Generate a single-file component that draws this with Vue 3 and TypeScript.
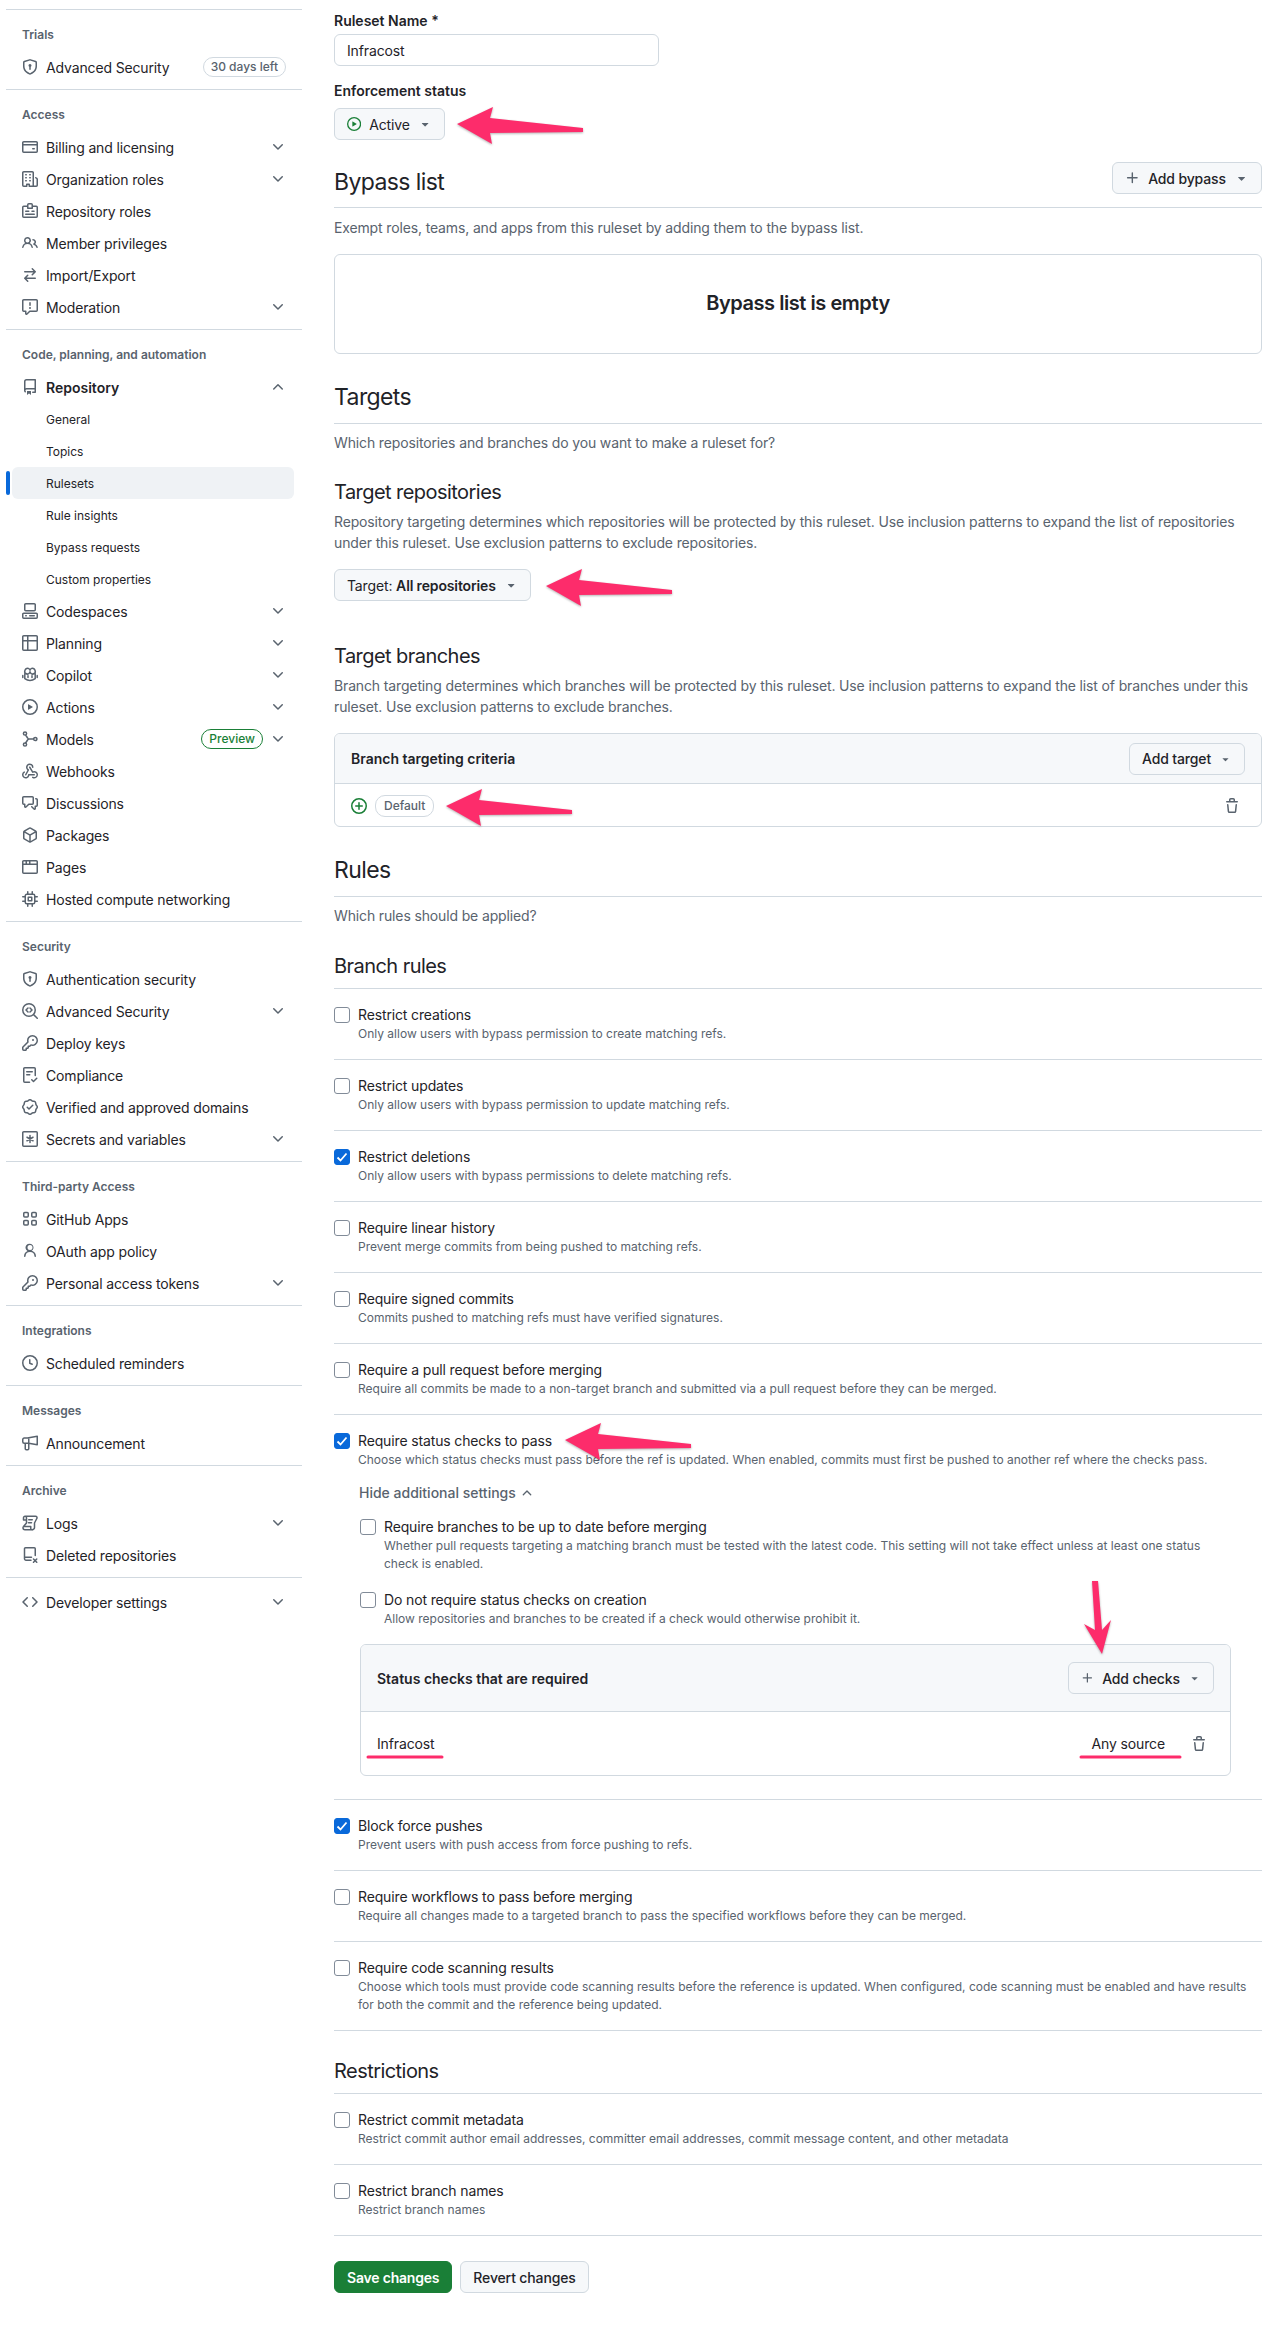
<script setup lang="ts">
import { h } from 'vue'

type IconDef = { f?: string; s?: string }

const icons: Record<string, IconDef> = {
  shield: { f: 'm8.533.133 5.25 1.68A1.75 1.75 0 0 1 15 3.48V7c0 1.566-.32 3.182-1.303 4.682-.983 1.498-2.585 2.813-5.032 3.855a1.697 1.697 0 0 1-1.33 0c-2.447-1.042-4.049-2.357-5.032-3.855C1.32 10.182 1 8.566 1 7V3.48a1.75 1.75 0 0 1 1.217-1.667l5.25-1.68a1.748 1.748 0 0 1 1.066 0Zm-.61 1.429.001.001-5.25 1.68a.251.251 0 0 0-.174.237V7c0 1.36.275 2.666 1.057 3.859.784 1.194 2.121 2.342 4.366 3.298a.196.196 0 0 0 .154 0c2.245-.957 3.582-2.103 4.366-3.297C13.225 9.666 13.5 8.358 13.5 7V3.48a.25.25 0 0 0-.174-.238l-5.25-1.68a.25.25 0 0 0-.153 0ZM9.5 6.5c0 .536-.286 1.032-.75 1.3v2.45a.75.75 0 0 1-1.5 0V7.8A1.5 1.5 0 1 1 9.5 6.5Z' },
  card: { f: 'M10.75 9a.75.75 0 0 0 0 1.5h1.5a.75.75 0 0 0 0-1.5h-1.5ZM0 3.75C0 2.784.784 2 1.75 2h12.5c.966 0 1.75.784 1.75 1.75v8.5A1.75 1.75 0 0 1 14.25 14H1.75A1.75 1.75 0 0 1 0 12.25ZM14.5 6.5h-13v5.75c0 .138.112.25.25.25h12.5a.25.25 0 0 0 .25-.25Zm0-2.75a.25.25 0 0 0-.25-.25H1.75a.25.25 0 0 0-.25.25V5h13Z' },
  org: { f: 'M1.75 16A1.75 1.75 0 0 1 0 14.25V1.75C0 .784.784 0 1.75 0h8.5C11.216 0 12 .784 12 1.75v12.5c0 .085-.006.168-.018.25h2.268a.25.25 0 0 0 .25-.25V8.285a.25.25 0 0 0-.111-.208l-1.055-.703a.749.749 0 1 1 .832-1.248l1.055.703c.487.325.779.871.779 1.456v5.965A1.75 1.75 0 0 1 14.25 16h-3.5a.766.766 0 0 1-.197-.026c-.099.017-.2.026-.303.026h-3a.75.75 0 0 1-.75-.75V14h-1v1.25a.75.75 0 0 1-.75.75Zm-.25-1.75c0 .138.112.25.25.25H4v-1.25a.75.75 0 0 1 .75-.75h2.5a.75.75 0 0 1 .75.75v1.25h2.25a.25.25 0 0 0 .25-.25V1.75a.25.25 0 0 0-.25-.25h-8.5a.25.25 0 0 0-.25.25ZM3.75 6h.5a.75.75 0 0 1 0 1.5h-.5a.75.75 0 0 1 0-1.5ZM3 3.75A.75.75 0 0 1 3.75 3h.5a.75.75 0 0 1 0 1.5h-.5A.75.75 0 0 1 3 3.75Zm4 3A.75.75 0 0 1 7.75 6h.5a.75.75 0 0 1 0 1.5h-.5A.75.75 0 0 1 7 6.75ZM7.75 3h.5a.75.75 0 0 1 0 1.5h-.5a.75.75 0 0 1 0-1.5ZM3 9.75A.75.75 0 0 1 3.75 9h.5a.75.75 0 0 1 0 1.5h-.5A.75.75 0 0 1 3 9.75ZM7.75 9h.5a.75.75 0 0 1 0 1.5h-.5a.75.75 0 0 1 0-1.5Z' },
  badge: { s: 'M5.5 3.25H1.75a1 1 0 0 0-1 1v9a1 1 0 0 0 1 1h12.5a1 1 0 0 0 1-1v-9a1 1 0 0 0-1-1H10.5M5.75 5.25v-3.5a1 1 0 0 1 1-1h2.5a1 1 0 0 1 1 1v3.5ZM3.75 8.25h3M3.75 11.25h8.5M10 8.25h2' },
  people: { f: 'M2 5.5a3.5 3.5 0 1 1 5.898 2.549 5.508 5.508 0 0 1 3.034 4.084.75.75 0 1 1-1.482.235 4 4 0 0 0-7.9 0 .75.75 0 0 1-1.482-.236A5.507 5.507 0 0 1 3.102 8.05 3.493 3.493 0 0 1 2 5.5ZM11 4a3.001 3.001 0 0 1 2.22 5.018 5.01 5.01 0 0 1 2.56 3.012.749.749 0 0 1-.885.954.752.752 0 0 1-.549-.514 3.507 3.507 0 0 0-2.522-2.372.75.75 0 0 1-.574-.73v-.352a.75.75 0 0 1 .416-.672A1.5 1.5 0 0 0 11 5.5.75.75 0 0 1 11 4Zm-5.5-.5a2 2 0 1 0-.001 3.999A2 2 0 0 0 5.5 3.5Z' },
  switch: { f: 'M5.22 14.78a.75.75 0 0 0 1.06-1.06L4.56 12h8.69a.75.75 0 0 0 0-1.5H4.56l1.72-1.72a.75.75 0 0 0-1.06-1.06l-3 3a.75.75 0 0 0 0 1.06l3 3Zm5.56-6.5a.75.75 0 1 1-1.06-1.06l1.72-1.72H2.75a.75.75 0 0 1 0-1.5h8.69L9.72 2.28a.75.75 0 0 1 1.06-1.06l3 3a.75.75 0 0 1 0 1.06l-3 3Z' },
  report: { f: 'M0 1.75C0 .784.784 0 1.75 0h12.5C15.216 0 16 .784 16 1.75v9.5A1.75 1.75 0 0 1 14.25 13H8.06l-2.573 2.573A1.458 1.458 0 0 1 3 14.543V13H1.75A1.75 1.75 0 0 1 0 11.25Zm1.75-.25a.25.25 0 0 0-.25.25v9.5c0 .138.112.25.25.25h2a.75.75 0 0 1 .75.75v2.19l2.72-2.72a.749.749 0 0 1 .53-.22h6.5a.25.25 0 0 0 .25-.25v-9.5a.25.25 0 0 0-.25-.25Zm7 2.25v2.5a.75.75 0 0 1-1.5 0v-2.5a.75.75 0 0 1 1.5 0ZM9 9a1 1 0 1 1-2 0 1 1 0 0 1 2 0Z' },
  repo: { f: 'M2 2.5A2.5 2.5 0 0 1 4.5 0h8.75a.75.75 0 0 1 .75.75v12.5a.75.75 0 0 1-.75.75h-2.5a.75.75 0 0 1 0-1.5h1.75v-2h-8a1 1 0 0 0-.714 1.7.75.75 0 1 1-1.072 1.05A2.495 2.495 0 0 1 2 11.5Zm10.5-1h-8a1 1 0 0 0-1 1v6.708A2.486 2.486 0 0 1 4.5 9h8ZM5 12.25a.25.25 0 0 1 .25-.25h3.5a.25.25 0 0 1 .25.25v3.25a.25.25 0 0 1-.4.2l-1.45-1.087a.249.249 0 0 0-.3 0L5.4 15.7a.25.25 0 0 1-.4-.2Z' },
  codespaces: { f: 'M0 11.25c0-.966.784-1.75 1.75-1.75h12.5c.966 0 1.75.784 1.75 1.75v3A1.75 1.75 0 0 1 14.25 16H1.75A1.75 1.75 0 0 1 0 14.25Zm2-9.5C2 .784 2.784 0 3.75 0h8.5C13.216 0 14 .784 14 1.75v5a1.75 1.75 0 0 1-1.75 1.75h-8.5A1.75 1.75 0 0 1 2 6.75Zm1.75-.25a.25.25 0 0 0-.25.25v5c0 .138.112.25.25.25h8.5a.25.25 0 0 0 .25-.25v-5a.25.25 0 0 0-.25-.25Zm-2 9.5a.25.25 0 0 0-.25.25v3c0 .138.112.25.25.25h12.5a.25.25 0 0 0 .25-.25v-3a.25.25 0 0 0-.25-.25ZM7 12.75a.75.75 0 0 1 .75-.75h4.5a.75.75 0 0 1 0 1.5h-4.5a.75.75 0 0 1-.75-.75Zm-4 0a.75.75 0 0 1 .75-.75h.5a.75.75 0 0 1 0 1.5h-.5a.75.75 0 0 1-.75-.75Z' },
  table: { f: 'M0 1.75C0 .784.784 0 1.75 0h12.5C15.216 0 16 .784 16 1.75v12.5A1.75 1.75 0 0 1 14.25 16H1.75A1.75 1.75 0 0 1 0 14.25ZM6.5 6.5v8h7.75a.25.25 0 0 0 .25-.25V6.5Zm8-1.5V1.75a.25.25 0 0 0-.25-.25H6.5V5Zm-13 1.5v7.75c0 .138.112.25.25.25H5v-8ZM5 5V1.5H1.75a.25.25 0 0 0-.25.25V5Z' },
  copilot: { s: 'M3 3.2C3.6 1.6 5.6 1 6.8 1.6c.7.3 1.2 1 1.2 1.6 0-.6.5-1.3 1.2-1.6 1.2-.6 3.2 0 3.8 1.6.4 1 .3 2.6-.7 3.3-1 .6-2.8.6-3.5-.2-.4-.4-.7-1-.8-1.5-.1.5-.4 1.1-.8 1.5-.7.8-2.5.8-3.5.2C2.7 5.8 2.6 4.2 3 3.2ZM2.8 6.5v5.2c1.6 1.2 3.4 1.9 5.2 1.9s3.6-.7 5.2-1.9V6.5M.8 8.5v2M15.2 8.5v2M6 8.75v1.75M10 8.75v1.75' },
  play: { f: 'M8 0a8 8 0 1 1 0 16A8 8 0 0 1 8 0ZM1.5 8a6.5 6.5 0 1 0 13 0 6.5 6.5 0 0 0-13 0Zm4.879-2.773 4.264 2.559a.25.25 0 0 1 0 .428l-4.264 2.559A.25.25 0 0 1 6 10.559V5.442a.25.25 0 0 1 .379-.215Z' },
  models: { s: 'M3.6 4l2 3c.3.6.8 1 1.5 1h4M3.6 12l2-3c.2-.4.6-1 1.5-1M4.6 2.5a1.6 1.6 0 1 1-3.2 0 1.6 1.6 0 0 1 3.2 0ZM4.6 13.5a1.6 1.6 0 1 1-3.2 0 1.6 1.6 0 0 1 3.2 0ZM14.9 8a1.6 1.6 0 1 1-3.2 0 1.6 1.6 0 0 1 3.2 0Z' },
  webhook: { f: 'M5.5 4.25a2.25 2.25 0 0 1 4.5 0 .75.75 0 0 0 1.5 0 3.75 3.75 0 1 0-6.14 2.889l-2.272 4.258a.75.75 0 0 0 1.324.706L7 7.25a.75.75 0 0 0-.309-1.015A2.25 2.25 0 0 1 5.5 4.25ZM7.364 3.607a.75.75 0 0 1 1.03.257l2.608 4.349a3.75 3.75 0 1 1-.628 6.785.75.75 0 0 1 .752-1.299 2.25 2.25 0 1 0-.033-3.88.75.75 0 0 1-1.03-.256L7.107 4.636a.75.75 0 0 1 .257-1.03ZM2.9 8.776A.75.75 0 0 1 2.625 9.8 2.25 2.25 0 1 0 6 11.75a.75.75 0 0 1 .75-.751h5.5a.75.75 0 0 1 0 1.5H7.425a3.751 3.751 0 1 1-5.55-3.998.75.75 0 0 1 1.024.274Z' },
  discussion: { f: 'M1.75 1h8.5c.966 0 1.75.784 1.75 1.75v5.5A1.75 1.75 0 0 1 10.25 10H7.061l-2.574 2.573A1.458 1.458 0 0 1 2 11.543V10h-.25A1.75 1.75 0 0 1 0 8.25v-5.5C0 1.784.784 1 1.75 1ZM1.5 2.75v5.5c0 .138.112.25.25.25h1a.75.75 0 0 1 .75.75v2.19l2.72-2.72a.749.749 0 0 1 .53-.22h3.5a.25.25 0 0 0 .25-.25v-5.5a.25.25 0 0 0-.25-.25h-8.5a.25.25 0 0 0-.25.25Zm13 2a.25.25 0 0 0-.25-.25h-.5a.75.75 0 0 1 0-1.5h.5c.966 0 1.75.784 1.75 1.75v5.5A1.75 1.75 0 0 1 14.25 12H14v1.543a1.458 1.458 0 0 1-2.487 1.03L9.22 12.28a.749.749 0 0 1 .326-1.275.749.749 0 0 1 .734.215l2.22 2.22v-2.19a.75.75 0 0 1 .75-.75h1a.25.25 0 0 0 .25-.25Z' },
  package: { f: 'm8.878.392 5.25 3.045c.54.314.872.89.872 1.514v6.098a1.75 1.75 0 0 1-.872 1.514l-5.25 3.045a1.75 1.75 0 0 1-1.756 0l-5.25-3.045A1.75 1.75 0 0 1 1 11.049V4.951c0-.624.332-1.201.872-1.514L7.122.392a1.75 1.75 0 0 1 1.756 0ZM7.875 1.69l-4.63 2.685L8 7.133l4.755-2.758-4.63-2.685a.248.248 0 0 0-.25 0ZM2.5 5.677v5.372c0 .09.047.171.125.216l4.625 2.683V8.432Zm6.25 8.271 4.625-2.683a.25.25 0 0 0 .125-.216V5.677L8.75 8.432Z' },
  browser: { f: 'M0 2.75C0 1.784.784 1 1.75 1h12.5c.966 0 1.75.784 1.75 1.75v10.5A1.75 1.75 0 0 1 14.25 15H1.75A1.75 1.75 0 0 1 0 13.25ZM14.5 6h-13v7.25c0 .138.112.25.25.25h12.5a.25.25 0 0 0 .25-.25Zm-6-3.5v2h6V2.75a.25.25 0 0 0-.25-.25ZM5 2.5v2h2v-2Zm-3.25 0a.25.25 0 0 0-.25.25V4.5h2v-2Z' },
  cpu: { s: 'M4.75 3.25h6.5a1.5 1.5 0 0 1 1.5 1.5v6.5a1.5 1.5 0 0 1-1.5 1.5h-6.5a1.5 1.5 0 0 1-1.5-1.5v-6.5a1.5 1.5 0 0 1 1.5-1.5ZM6.25 6.25h3.5v3.5h-3.5ZM5.75.75v2.5M10.25.75v2.5M5.75 12.75v2.5M10.25 12.75v2.5M.75 5.75h2.5M.75 10.25h2.5M12.75 5.75h2.5M12.75 10.25h2.5' },
  codescan: { s: 'M13.25 7a6.25 6.25 0 1 1-12.5 0 6.25 6.25 0 0 1 12.5 0ZM11.6 11.6l3.65 3.65M6 5 4 7l2 2M8 5l2 2-2 2' },
  key: { f: 'M10.5 0a5.499 5.499 0 1 1-1.288 10.848l-.932.932a.749.749 0 0 1-.53.22H7v.75a.749.749 0 0 1-.22.53l-.5.5a.749.749 0 0 1-.53.22H5v.75a.749.749 0 0 1-.22.53l-.5.5a.749.749 0 0 1-.53.22h-2A1.75 1.75 0 0 1 0 14.25v-2c0-.199.079-.389.22-.53l4.932-4.932A5.5 5.5 0 0 1 10.5 0Zm-4 5.5c-.001.431.069.86.205 1.269a.75.75 0 0 1-.181.768L1.5 12.56v1.69c0 .138.112.25.25.25h1.69l.06-.06v-1.19a.75.75 0 0 1 .75-.75h1.19l.06-.06v-1.19a.75.75 0 0 1 .75-.75h1.19l1.023-1.025a.75.75 0 0 1 .768-.18A4 4 0 1 0 6.5 5.5ZM11 6a1 1 0 1 1 0-2 1 1 0 0 1 0 2Z' },
  compliance: { s: 'M13.25 8.5V1.75a1 1 0 0 0-1-1h-9.5a1 1 0 0 0-1 1v12.5a1 1 0 0 0 1 1H7.5M4.75 4.75h5.5M4.75 7.75h3M9.75 12.75l1.75 1.75 3.25-3.25' },
  verified: { f: 'm9.585.52.929.68c.153.112.331.186.518.215l1.138.175a2.678 2.678 0 0 1 2.24 2.24l.174 1.139c.029.187.103.365.215.518l.68.928a2.677 2.677 0 0 1 0 3.17l-.68.928a1.174 1.174 0 0 0-.215.518l-.175 1.138a2.678 2.678 0 0 1-2.241 2.241l-1.138.175a1.17 1.17 0 0 0-.518.215l-.928.68a2.677 2.677 0 0 1-3.17 0l-.928-.68a1.174 1.174 0 0 0-.518-.215L3.83 14.41a2.678 2.678 0 0 1-2.24-2.24l-.175-1.138a1.17 1.17 0 0 0-.215-.518l-.68-.928a2.677 2.677 0 0 1 0-3.17l.68-.928c.112-.153.186-.331.215-.518l.175-1.14a2.678 2.678 0 0 1 2.24-2.24l1.139-.175c.187-.029.365-.103.518-.215l.928-.68a2.677 2.677 0 0 1 3.17 0ZM7.303 1.728l-.927.68a2.67 2.67 0 0 1-1.18.489l-1.137.174a1.179 1.179 0 0 0-.987.987l-.174 1.136a2.677 2.677 0 0 1-.489 1.18l-.68.928a1.18 1.18 0 0 0 0 1.394l.68.927c.256.348.424.753.489 1.18l.174 1.137c.078.509.478.909.987.987l1.136.174a2.67 2.67 0 0 1 1.18.489l.928.68c.414.305.979.305 1.394 0l.927-.68a2.67 2.67 0 0 1 1.18-.489l1.137-.174a1.18 1.18 0 0 0 .987-.987l.174-1.136a2.67 2.67 0 0 1 .489-1.18l.68-.928a1.176 1.176 0 0 0 0-1.394l-.68-.927a2.686 2.686 0 0 1-.489-1.18l-.174-1.137a1.179 1.179 0 0 0-.987-.987l-1.136-.174a2.677 2.677 0 0 1-1.18-.489l-.928-.68a1.176 1.176 0 0 0-1.394 0ZM11.28 6.78l-3.75 3.75a.75.75 0 0 1-1.06 0L4.72 8.78a.751.751 0 0 1 .018-1.042.751.751 0 0 1 1.042-.018L7 8.939l3.22-3.219a.751.751 0 0 1 1.042.018.751.751 0 0 1 .018 1.042Z' },
  secret: { s: 'M1.75.75h12.5a1 1 0 0 1 1 1v12.5a1 1 0 0 1-1 1H1.75a1 1 0 0 1-1-1V1.75a1 1 0 0 1 1-1ZM8 4.5v7M5 6.25l6 3.5M11 6.25l-6 3.5' },
  apps: { s: 'M2.75 1.5h2.5a1 1 0 0 1 1 1V5a1 1 0 0 1-1 1h-2.5a1 1 0 0 1-1-1V2.5a1 1 0 0 1 1-1ZM10.75 1.5h2.5a1 1 0 0 1 1 1V5a1 1 0 0 1-1 1h-2.5a1 1 0 0 1-1-1V2.5a1 1 0 0 1 1-1ZM2.75 9.5h2.5a1 1 0 0 1 1 1V13a1 1 0 0 1-1 1h-2.5a1 1 0 0 1-1-1v-2.5a1 1 0 0 1 1-1ZM10.75 9.5h2.5a1 1 0 0 1 1 1V13a1 1 0 0 1-1 1h-2.5a1 1 0 0 1-1-1v-2.5a1 1 0 0 1 1-1Z' },
  person: { f: 'M10.561 8.073a6.005 6.005 0 0 1 3.432 5.142.75.75 0 1 1-1.498.07 4.5 4.5 0 0 0-8.99 0 .75.75 0 0 1-1.498-.07 6.004 6.004 0 0 1 3.431-5.142 3.999 3.999 0 1 1 4.123 0ZM10.5 4.5a2.5 2.5 0 1 0-5 0 2.5 2.5 0 0 0 5 0Z' },
  clock: { f: 'M8 0a8 8 0 1 1 0 16A8 8 0 0 1 8 0ZM1.5 8a6.5 6.5 0 1 0 13 0 6.5 6.5 0 0 0-13 0Zm7-3.25v2.992l2.028.812a.75.75 0 0 1-.557 1.392l-2.5-1A.751.751 0 0 1 7 8.25v-3.5a.75.75 0 0 1 1.5 0Z' },
  megaphone: { s: 'M15.25 1.25v8.5L6.75 8.25M15.25 1.25 5.5 3H2.25a1.5 1.5 0 0 0-1.5 1.5v2.25a1.5 1.5 0 0 0 1.5 1.5h4.5M3.25 8.25v5.5a1 1 0 0 0 1 1h1.5a1 1 0 0 0 1-1v-5.5M6.75 3v5.25' },
  scroll: { s: 'M3 1.25h10.5a1.5 1.5 0 0 1 1.3 2.25l-2.3 4.5v4.5a2.25 2.25 0 0 1-2.25 2.25H3a2 2 0 0 1-2-2c0-.5.2-1 .5-1.25L4.5 8V2.75A1.5 1.5 0 0 0 3 1.25a1.5 1.5 0 0 0-1.5 1.5V5h3M1.5 11.5h7.25v2a1.75 1.75 0 0 0 1.5 1.5M6.75 4.75h3.5M6.5 7.75h3' },
  deleted: { s: 'M13.25 8.5V1.75a1 1 0 0 0-1-1H3.5a1 1 0 0 0-1 1v10a1.5 1.5 0 0 0 1.5 1.5h5M2.5 10.25h7M11.5 12l3.25 3.25M14.75 12l-3.25 3.25' },
  code: { f: 'm11.28 3.22 4.25 4.25a.75.75 0 0 1 0 1.06l-4.25 4.25a.749.749 0 0 1-1.275-.326.749.749 0 0 1 .215-.734L13.94 8l-3.72-3.72a.749.749 0 0 1 .326-1.275.749.749 0 0 1 .734.215Zm-6.56 0a.751.751 0 0 1 1.042.018.751.751 0 0 1 .018 1.042L2.06 8l3.72 3.72a.749.749 0 0 1-.326 1.275.749.749 0 0 1-.734-.215L.47 8.53a.75.75 0 0 1 0-1.06Z' },
  down: { f: 'M12.78 5.22a.749.749 0 0 1 0 1.06l-4.25 4.25a.749.749 0 0 1-1.06 0L3.22 6.28a.749.749 0 1 1 1.06-1.06L8 8.939l3.72-3.72a.749.749 0 0 1 1.06 0Z' },
  up: { f: 'M3.22 10.53a.749.749 0 0 1 0-1.06l4.25-4.25a.749.749 0 0 1 1.06 0l4.25 4.25a.749.749 0 1 1-1.06 1.06L8 6.811 4.28 10.53a.749.749 0 0 1-1.06 0Z' },
  plus: { f: 'M7.75 2a.75.75 0 0 1 .75.75V7h4.25a.75.75 0 0 1 0 1.5H8.5v4.25a.75.75 0 0 1-1.5 0V8.5H2.75a.75.75 0 0 1 0-1.5H7V2.75A.75.75 0 0 1 7.75 2Z' },
  plusCircle: { f: 'M8 0a8 8 0 1 1 0 16A8 8 0 0 1 8 0ZM1.5 8a6.5 6.5 0 1 0 13 0 6.5 6.5 0 0 0-13 0Zm7.25-3.25v2.5h2.5a.75.75 0 0 1 0 1.5h-2.5v2.5a.75.75 0 0 1-1.5 0v-2.5h-2.5a.75.75 0 0 1 0-1.5h2.5v-2.5a.75.75 0 0 1 1.5 0Z' },
  trash: { f: 'M11 1.75V3h2.25a.75.75 0 0 1 0 1.5H2.75a.75.75 0 0 1 0-1.5H5V1.75C5 .784 5.784 0 6.75 0h2.5C10.216 0 11 .784 11 1.75ZM4.496 6.675l.66 6.6a.25.25 0 0 0 .249.225h5.19a.25.25 0 0 0 .249-.225l.66-6.6a.75.75 0 0 1 1.492.149l-.66 6.6A1.748 1.748 0 0 1 10.595 15h-5.19a1.75 1.75 0 0 1-1.741-1.575l-.66-6.6a.75.75 0 1 1 1.492-.15ZM6.5 1.75V3h3V1.75a.25.25 0 0 0-.25-.25h-2.5a.25.25 0 0 0-.25.25Z' },
  caret: { f: 'm4.427 7.427 3.396 3.396a.25.25 0 0 0 .354 0l3.396-3.396A.25.25 0 0 0 11.396 7H4.604a.25.25 0 0 0-.177.427Z' },
}

const Octicon = (props: { name: string; size?: number }) => {
  const def = icons[props.name]
  const paths = []
  if (def.f) paths.push(h('path', { d: def.f, fill: 'currentColor' }))
  if (def.s) {
    paths.push(h('path', {
      d: def.s,
      fill: 'none',
      stroke: 'currentColor',
      'stroke-width': 1.5,
      'stroke-linecap': 'round',
      'stroke-linejoin': 'round',
    }))
  }
  const size = props.size ?? 16
  return h('svg', { viewBox: '0 0 16 16', width: size, height: size, 'aria-hidden': 'true' }, paths)
}
Octicon.props = ['name', 'size']

type NavItem = {
  label: string
  icon?: string
  chevron?: 'down' | 'up'
  bold?: boolean
  sub?: boolean
  active?: boolean
  pill?: string
  preview?: boolean
}
type NavSection = { title?: string; items: NavItem[] }

const nav: NavSection[] = [
  { title: 'Trials', items: [{ label: 'Advanced Security', icon: 'shield', pill: '30 days left' }] },
  {
    title: 'Access',
    items: [
      { label: 'Billing and licensing', icon: 'card', chevron: 'down' },
      { label: 'Organization roles', icon: 'org', chevron: 'down' },
      { label: 'Repository roles', icon: 'badge' },
      { label: 'Member privileges', icon: 'people' },
      { label: 'Import/Export', icon: 'switch' },
      { label: 'Moderation', icon: 'report', chevron: 'down' },
    ],
  },
  {
    title: 'Code, planning, and automation',
    items: [
      { label: 'Repository', icon: 'repo', chevron: 'up', bold: true },
      { label: 'General', sub: true },
      { label: 'Topics', sub: true },
      { label: 'Rulesets', sub: true, active: true },
      { label: 'Rule insights', sub: true },
      { label: 'Bypass requests', sub: true },
      { label: 'Custom properties', sub: true },
      { label: 'Codespaces', icon: 'codespaces', chevron: 'down' },
      { label: 'Planning', icon: 'table', chevron: 'down' },
      { label: 'Copilot', icon: 'copilot', chevron: 'down' },
      { label: 'Actions', icon: 'play', chevron: 'down' },
      { label: 'Models', icon: 'models', chevron: 'down', preview: true },
      { label: 'Webhooks', icon: 'webhook' },
      { label: 'Discussions', icon: 'discussion' },
      { label: 'Packages', icon: 'package' },
      { label: 'Pages', icon: 'browser' },
      { label: 'Hosted compute networking', icon: 'cpu' },
    ],
  },
  {
    title: 'Security',
    items: [
      { label: 'Authentication security', icon: 'shield' },
      { label: 'Advanced Security', icon: 'codescan', chevron: 'down' },
      { label: 'Deploy keys', icon: 'key' },
      { label: 'Compliance', icon: 'compliance' },
      { label: 'Verified and approved domains', icon: 'verified' },
      { label: 'Secrets and variables', icon: 'secret', chevron: 'down' },
    ],
  },
  {
    title: 'Third-party Access',
    items: [
      { label: 'GitHub Apps', icon: 'apps' },
      { label: 'OAuth app policy', icon: 'person' },
      { label: 'Personal access tokens', icon: 'key', chevron: 'down' },
    ],
  },
  { title: 'Integrations', items: [{ label: 'Scheduled reminders', icon: 'clock' }] },
  { title: 'Messages', items: [{ label: 'Announcement', icon: 'megaphone' }] },
  {
    title: 'Archive',
    items: [
      { label: 'Logs', icon: 'scroll', chevron: 'down' },
      { label: 'Deleted repositories', icon: 'deleted' },
    ],
  },
  { items: [{ label: 'Developer settings', icon: 'code', chevron: 'down' }] },
]

type Rule = { title: string; desc: string; checked?: boolean }

const rulesBefore: Rule[] = [
  { title: 'Restrict creations', desc: 'Only allow users with bypass permission to create matching refs.' },
  { title: 'Restrict updates', desc: 'Only allow users with bypass permission to update matching refs.' },
  { title: 'Restrict deletions', desc: 'Only allow users with bypass permissions to delete matching refs.', checked: true },
  { title: 'Require linear history', desc: 'Prevent merge commits from being pushed to matching refs.' },
  { title: 'Require signed commits', desc: 'Commits pushed to matching refs must have verified signatures.' },
  { title: 'Require a pull request before merging', desc: 'Require all commits be made to a non-target branch and submitted via a pull request before they can be merged.' },
]

const rulesAfter: Rule[] = [
  { title: 'Block force pushes', desc: 'Prevent users with push access from force pushing to refs.', checked: true },
  { title: 'Require workflows to pass before merging', desc: 'Require all changes made to a targeted branch to pass the specified workflows before they can be merged.' },
  { title: 'Require code scanning results', desc: 'Choose which tools must provide code scanning results before the reference is updated. When configured, code scanning must be enabled and have results for both the commit and the reference being updated.' },
]

const restrictions: Rule[] = [
  { title: 'Restrict commit metadata', desc: 'Restrict commit author email addresses, committer email addresses, commit message content, and other metadata' },
  { title: 'Restrict branch names', desc: 'Restrict branch names' },
]

const subSettings: Rule[] = [
  { title: 'Require branches to be up to date before merging', desc: 'Whether pull requests targeting a matching branch must be tested with the latest code. This setting will not take effect unless at least one status check is enabled.' },
  { title: 'Do not require status checks on creation', desc: 'Allow repositories and branches to be created if a check would otherwise prohibit it.' },
]

// annotation arrows drawn on top of the screenshot, tip at x,y
const arrowShape = 'M0 0 36 -17 33 -6 126 4 126 8 33 9 35 20Z'
const arrows = [
  { x: 457, y: 124 },
  { x: 546, y: 586 },
  { x: 446, y: 806 },
  { x: 565, y: 1440 },
]
</script>

<template>
  <div class="page">
    <aside class="sidebar">
      <section v-for="(sec, i) in nav" :key="i" class="nav-section" :class="{ untitled: !sec.title }">
        <h3 v-if="sec.title" class="nav-title">{{ sec.title }}</h3>
        <div
          v-for="item in sec.items"
          :key="item.label"
          class="nav-row"
          :class="{ bold: item.bold, sub: item.sub, active: item.active }"
        >
          <Octicon v-if="item.icon" :name="item.icon" class="nav-icon" />
          <span class="nav-label">{{ item.label }}</span>
          <span v-if="item.pill" class="pill">{{ item.pill }}</span>
          <span v-if="item.preview" class="pill preview">Preview</span>
          <Octicon v-if="item.chevron" :name="item.chevron" class="nav-chevron" />
        </div>
      </section>
    </aside>

    <main class="main">
      <label class="field-label first">Ruleset Name *</label>
      <div class="text-input">Infracost</div>
      <label class="field-label status">Enforcement status</label>
      <button class="btn status-btn">
        <Octicon name="play" class="green" />
        <span>Active</span>
        <Octicon name="caret" class="caret" />
      </button>

      <div class="bypass-head">
        <h2 class="h-big">Bypass list</h2>
        <button class="btn bypass-btn">
          <Octicon name="plus" class="muted" />
          <span>Add bypass</span>
          <Octicon name="caret" class="caret" />
        </button>
      </div>
      <p class="lead bypass-lead">Exempt roles, teams, and apps from this ruleset by adding them to the bypass list.</p>
      <div class="bypass-empty">Bypass list is empty</div>

      <h2 class="h-big ruled">Targets</h2>
      <p class="lead">Which repositories and branches do you want to make a ruleset for?</p>

      <h3 class="h-mid repos">Target repositories</h3>
      <p class="lead para">Repository targeting determines which repositories will be protected by this ruleset. Use inclusion patterns to expand the list of repositories under this ruleset. Use exclusion patterns to exclude repositories.</p>
      <button class="btn target-btn">
        <span>Target: <b>All repositories</b></span>
        <Octicon name="caret" class="caret" />
      </button>

      <h3 class="h-mid branches">Target branches</h3>
      <p class="lead para">Branch targeting determines which branches will be protected by this ruleset. Use inclusion patterns to expand the list of branches under this ruleset. Use exclusion patterns to exclude branches.</p>

      <div class="panel criteria">
        <div class="panel-head">
          <b>Branch targeting criteria</b>
          <button class="btn add-target">
            <span>Add target</span>
            <Octicon name="caret" class="caret" />
          </button>
        </div>
        <div class="criteria-row">
          <Octicon name="plusCircle" class="green" />
          <span class="default-label">Default</span>
          <Octicon name="trash" class="muted trash" />
        </div>
      </div>

      <h2 class="h-big ruled rules">Rules</h2>
      <p class="lead">Which rules should be applied?</p>
      <h3 class="h-mid ruled branch-rules">Branch rules</h3>

      <div v-for="r in rulesBefore" :key="r.title" class="rule">
        <span class="check" :class="{ on: r.checked }">
          <svg v-if="r.checked" viewBox="0 0 16 16" width="16" height="16"><path d="M3.5 8.5 6.5 11.5 12.5 4.5" fill="none" stroke="#fff" stroke-width="1.8" /></svg>
        </span>
        <div>
          <div class="rule-title">{{ r.title }}</div>
          <div class="rule-desc">{{ r.desc }}</div>
        </div>
      </div>

      <div class="rule status-rule">
        <span class="check on">
          <svg viewBox="0 0 16 16" width="16" height="16"><path d="M3.5 8.5 6.5 11.5 12.5 4.5" fill="none" stroke="#fff" stroke-width="1.8" /></svg>
        </span>
        <div class="status-body">
          <div class="rule-title">Require status checks to pass</div>
          <div class="rule-desc">Choose which status checks must pass before the ref is updated. When enabled, commits must first be pushed to another ref where the checks pass.</div>
          <div class="hide-settings">Hide additional settings <Octicon name="up" :size="14" /></div>
          <div v-for="s in subSettings" :key="s.title" class="sub-setting">
            <span class="check"></span>
            <div>
              <div class="rule-title">{{ s.title }}</div>
              <div class="rule-desc">{{ s.desc }}</div>
            </div>
          </div>
          <div class="panel checks">
            <div class="panel-head checks-head">
              <b>Status checks that are required</b>
              <button class="btn add-checks">
                <Octicon name="plus" class="muted" />
                <span>Add checks</span>
                <Octicon name="caret" class="caret" />
              </button>
            </div>
            <div class="checks-row">
              <span>Infracost</span>
              <span class="any-source">Any source</span>
              <Octicon name="trash" class="muted" />
            </div>
          </div>
        </div>
      </div>

      <div v-for="r in rulesAfter" :key="r.title" class="rule">
        <span class="check" :class="{ on: r.checked }">
          <svg v-if="r.checked" viewBox="0 0 16 16" width="16" height="16"><path d="M3.5 8.5 6.5 11.5 12.5 4.5" fill="none" stroke="#fff" stroke-width="1.8" /></svg>
        </span>
        <div>
          <div class="rule-title">{{ r.title }}</div>
          <div class="rule-desc">{{ r.desc }}</div>
        </div>
      </div>

      <h3 class="h-mid ruled restrictions">Restrictions</h3>
      <div v-for="r in restrictions" :key="r.title" class="rule">
        <span class="check"></span>
        <div>
          <div class="rule-title">{{ r.title }}</div>
          <div class="rule-desc">{{ r.desc }}</div>
        </div>
      </div>

      <div class="actions">
        <button class="btn save">Save changes</button>
        <button class="btn">Revert changes</button>
      </div>
    </main>

    <svg class="marks" viewBox="0 0 1282 2333" width="1282" height="2333">
      <g class="arrows">
        <path v-for="a in arrows" :key="a.y" :d="arrowShape" :transform="`translate(${a.x} ${a.y})`" />
        <path d="M1092 1581 1098 1581 1102 1630 1111 1620 1102 1654 1084 1624 1095 1630Z" />
      </g>
      <path d="M368 1757H442M1081 1757H1180" stroke="#fd2c6b" stroke-width="3" stroke-linecap="round" />
    </svg>
  </div>
</template>

<style>
html, body {
  margin: 0;
  background: #fff;
}
</style>

<style scoped>
.page {
  position: relative;
  display: flex;
  width: 1282px;
  height: 2333px;
  overflow: hidden;
  font-family: Inter, "Liberation Sans", sans-serif;
  font-size: 14px;
  letter-spacing: -0.14px;
  color: #1f2328;
}

.sidebar {
  width: 296px;
  margin-left: 6px;
  padding-top: 9px;
  flex-shrink: 0;
}

.nav-section {
  border-top: 1px solid #d1d9e0;
  padding-bottom: 6px;
}

.nav-section.untitled {
  padding-top: 8px;
}

.nav-title {
  margin: 0;
  padding: 16px 0 7px 16px;
  font-size: 12px;
  line-height: 18px;
  font-weight: 600;
  letter-spacing: 0;
  color: #59636e;
}

.nav-row {
  position: relative;
  display: flex;
  align-items: center;
  height: 32px;
  width: 282px;
  margin-left: 6px;
  padding: 0 8px 0 10px;
  box-sizing: border-box;
  border-radius: 6px;
}

.nav-row.sub {
  padding-left: 34px;
  font-size: 12px;
  letter-spacing: 0;
}

.nav-row.bold {
  font-weight: 600;
  letter-spacing: 0;
}

.nav-row.active {
  background: #eff2f5;
}

.nav-row.active::before {
  content: "";
  position: absolute;
  left: -6px;
  top: 4px;
  width: 4px;
  height: 24px;
  border-radius: 6px;
  background: #0969da;
}

.nav-icon {
  margin-right: 8px;
  color: #59636e;
  flex-shrink: 0;
}

.nav-label {
  white-space: nowrap;
}

.nav-chevron {
  position: absolute;
  right: 8px;
  color: #59636e;
}

.pill {
  position: absolute;
  right: 8px;
  height: 18px;
  line-height: 18px;
  padding: 0 7px;
  border: 1px solid #d1d9e0;
  border-radius: 10px;
  font-size: 12px;
  font-weight: 500;
  letter-spacing: 0;
  color: #59636e;
  white-space: nowrap;
}

.pill.preview {
  right: 31px;
  border-color: #1a7f37;
  color: #1a7f37;
}

.main {
  width: 928px;
  margin-left: 32px;
  padding-top: 11px;
  flex-shrink: 0;
}

.field-label {
  display: block;
  font-weight: 600;
  letter-spacing: 0;
  line-height: 20px;
}

.field-label.status {
  margin-top: 15px;
}

.text-input {
  width: 325px;
  height: 32px;
  margin-top: 3px;
  padding: 0 12px;
  box-sizing: border-box;
  line-height: 31px;
  border: 1px solid #d1d9e0;
  border-radius: 6px;
}

.btn {
  display: inline-flex;
  align-items: center;
  height: 32px;
  padding: 0 12px;
  box-sizing: border-box;
  gap: 8px;
  border: 1px solid #d1d9e0;
  border-radius: 6px;
  background: #f6f8fa;
  font-family: inherit;
  font-size: 14px;
  font-weight: 500;
  letter-spacing: -0.14px;
  color: #1f2328;
  white-space: nowrap;
}

.btn b {
  font-weight: 600;
}

.status-btn {
  display: flex;
  margin-top: 7px;
  width: 111px;
  font-weight: 400;
}

.green {
  color: #1a7f37;
}

.muted {
  color: #59636e;
}

.caret {
  color: #59636e;
  margin-left: auto;
}

.bypass-head {
  display: flex;
  justify-content: space-between;
  align-items: flex-start;
  margin-top: 22px;
  padding-bottom: 7px;
  border-bottom: 1px solid #d1d9e0;
}

.bypass-head .h-big {
  margin-top: 2px;
}

.bypass-btn {
  width: 150px;
}

.h-big {
  margin: 1px 0 0;
  font-size: 23px;
  line-height: 36px;
  font-weight: 400;
  letter-spacing: -0.6px;
}

.h-mid {
  margin: 0;
  font-size: 20px;
  line-height: 30px;
  font-weight: 400;
  letter-spacing: -0.55px;
}

.h-big.ruled {
  margin-top: 25px;
  padding-bottom: 8px;
  border-bottom: 1px solid #d1d9e0;
}

.h-mid.ruled {
  padding-bottom: 7px;
  border-bottom: 1px solid #d1d9e0;
}

.lead {
  margin: 8px 0 0;
  line-height: 21px;
  color: #59636e;
}

.bypass-lead {
  margin-top: 9px;
}

.para {
  margin-top: 4px;
}

.bypass-empty {
  height: 100px;
  margin-top: 16px;
  padding-bottom: 2px;
  box-sizing: border-box;
  display: flex;
  align-items: center;
  justify-content: center;
  border: 1px solid #d1d9e0;
  border-radius: 6px;
  font-size: 20px;
  font-weight: 600;
  letter-spacing: -0.45px;
}

.repos {
  margin-top: 24px;
}

.target-btn {
  display: flex;
  margin-top: 16px;
  width: 197px;
  font-weight: 400;
}

.branches {
  margin-top: 40px;
}

.panel {
  border: 1px solid #d1d9e0;
  border-radius: 6px;
  overflow: hidden;
}

.panel b {
  font-weight: 600;
  letter-spacing: 0;
}

.panel-head {
  display: flex;
  align-items: center;
  justify-content: space-between;
  background: #f6f8fa;
  border-bottom: 1px solid #d1d9e0;
}

.criteria {
  margin-top: 16px;
  height: 94px;
  box-sizing: border-box;
}

.criteria .panel-head {
  height: 49px;
  padding: 0 16px;
}

.add-target {
  width: 116px;
}

.add-checks {
  width: 146px;
}

.criteria-row {
  display: flex;
  align-items: center;
  height: 44px;
  padding: 0 16px;
  gap: 8px;
}

.default-label {
  height: 20px;
  line-height: 20px;
  padding: 0 8px;
  border: 1px solid #d1d9e0;
  border-radius: 10px;
  font-size: 12px;
  font-weight: 500;
  letter-spacing: 0;
  color: #59636e;
}

.trash {
  margin-left: auto;
  margin-right: 5px;
}

.rules {
  margin-top: 26px;
}

.branch-rules {
  margin-top: 25px;
}

.rule {
  display: flex;
  gap: 8px;
  padding: 16px 0;
  border-bottom: 1px solid #d1d9e0;
  box-sizing: border-box;
}

.check {
  width: 16px;
  height: 16px;
  margin-top: 2px;
  box-sizing: border-box;
  flex-shrink: 0;
  border: 1px solid #818b98;
  border-radius: 3px;
  background: #fff;
}

.check.on {
  background: #0969da;
  border-color: #0969da;
}

.check.on svg {
  display: block;
  margin: -1px;
}

.rule-title {
  line-height: 20px;
}

.rule-desc {
  font-size: 12px;
  line-height: 18px;
  letter-spacing: 0;
  color: #59636e;
}

.status-rule {
  padding-bottom: 23px;
}

.status-body {
  flex: 1;
  min-width: 0;
}

.hide-settings {
  display: flex;
  align-items: center;
  gap: 4px;
  margin-top: 14px;
  line-height: 20px;
  font-weight: 500;
  letter-spacing: 0;
  color: #59636e;
  margin-left: 1px;
}

.sub-setting {
  display: flex;
  gap: 8px;
  width: 871px;
  margin-top: 14px;
  margin-left: 2px;
}

.sub-setting + .sub-setting {
  margin-top: 17px;
}

.checks {
  width: 871px;
  margin-top: 16px;
  margin-left: 2px;
  box-sizing: border-box;
}

.checks-head {
  height: 66px;
  padding: 0 16px;
}

.checks-row {
  display: flex;
  align-items: center;
  height: 63px;
  padding: 0 23px 0 16px;
}

.any-source {
  margin-left: auto;
  margin-right: 26px;
}

.restrictions {
  margin-top: 25px;
}

.actions {
  display: flex;
  gap: 8px;
  margin-top: 25px;
}

.save {
  background: #1a7f37;
  border-color: #1a7f37;
  color: #fff;
  font-weight: 600;
  letter-spacing: -0.2px;
}

.marks {
  position: absolute;
  left: 0;
  top: 0;
  pointer-events: none;
}

.arrows {
  fill: #fd2c6b;
  filter: drop-shadow(0 1px 1px rgba(0, 0, 0, 0.3));
}
</style>
